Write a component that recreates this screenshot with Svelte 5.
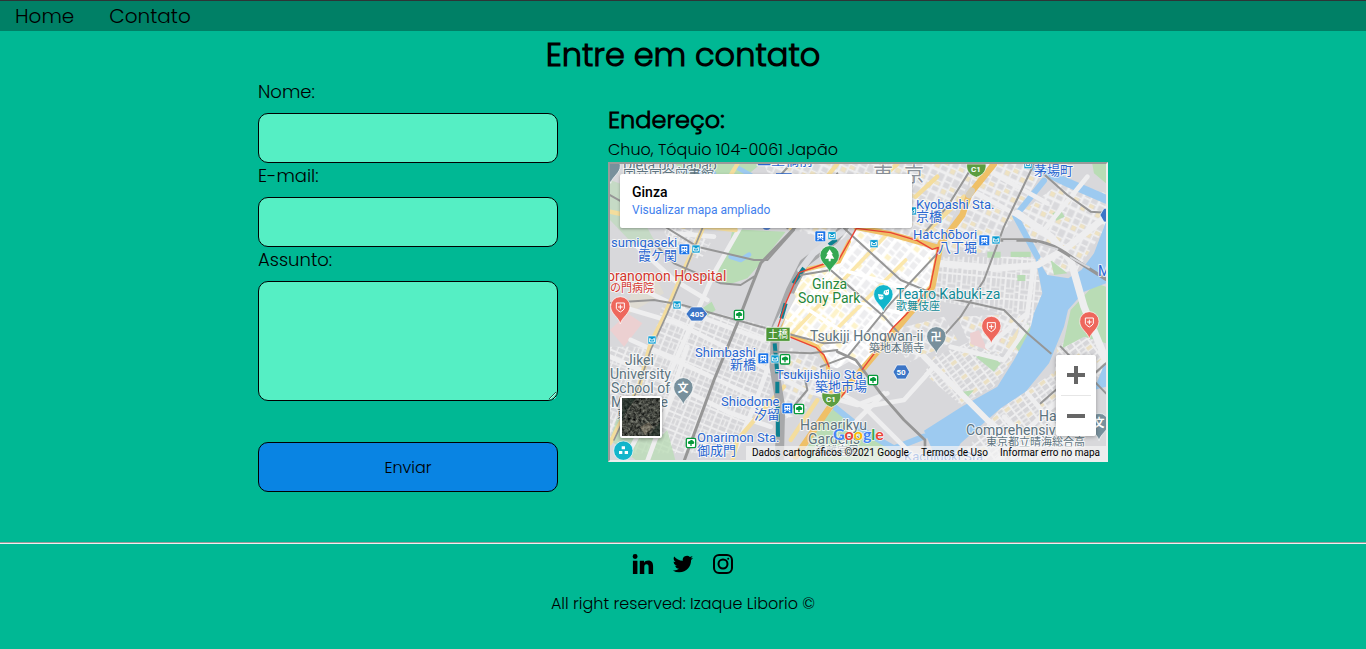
<script>
  let nome = $state('');
  let email = $state('');
  let assunto = $state('');

  // Map places use a grid three times finer than the drawn size.
  const px = (n) => Math.round(n / 3);

  const blue = '#2a67d0';
  const slate = '#5d7480';
  const red = '#d3352c';
  const green = '#25873b';
  const teal = '#118a96';

  const labels = [
    ['Dieta do Japão', 56, 29, 14, slate],
    ['国立国会図書館', 56, 58, 13, slate],
    ['二重橋前', 460, 15, 14, blue],
    ['東', 806, 66, 20, '#8d939b'],
    ['京', 900, 66, 20, '#8d939b'],
    ['茅場町', 1291, 46, 13, blue],
    ['Kyobashi Sta.', 937, 147, 13, blue],
    ['京橋', 937, 184, 13, blue],
    ['Hatchōbori', 928, 237, 13, blue],
    ['八丁堀', 1003, 275, 13, blue],
    ['sumigaseki', 20, 261, 13, blue],
    ['霞ケ関', 103, 300, 13, blue],
    ['oranomon Hospital', 8, 363, 14, red],
    ['の門病院', 18, 395, 11, red],
    ['Ginza', 625, 387, 14, green],
    ['Sony Park', 583, 429, 14, green],
    ['Teatro Kabuki-za', 877, 417, 14, teal],
    ['歌舞伎座', 877, 449, 11, teal],
    ['Tsukiji Hongwan-ii', 619, 543, 14, slate],
    ['築地本願寺', 796, 577, 11, slate],
    ['Shimbashi', 274, 591, 13, blue],
    ['新橋', 379, 628, 13, blue],
    ['Tsukijishijo Sta.', 517, 656, 13, blue],
    ['築地市場', 634, 694, 13, blue],
    ['Jikei', 64, 614, 14, slate],
    ['University', 18, 656, 14, slate],
    ['School of', 22, 698, 14, slate],
    ['Medicine', 22, 740, 14, slate],
    ['東京慈', 40, 775, 11, slate],
    ['Shiodome', 352, 739, 13, blue],
    ['汐留', 451, 778, 13, blue],
    ['Hamarikyu', 589, 811, 14, slate],
    ['Gardens', 613, 853, 14, slate],
    ['浜離宮恩', 632, 886, 11, slate],
    ['Onarimon Sta.', 280, 845, 13, blue],
    ['御成門', 280, 884, 13, blue],
    ['Kachidoki Sta.', 900, 902, 13, blue],
    ['Harumi', 1306, 783, 14, slate],
    ['Comprehensive', 1087, 825, 14, slate],
    ['東京都立晴海総合高', 1146, 857, 11, slate],
    ['M', 1483, 347, 14, blue]
  ];

  const trains = [[241, 268], [649, 229], [1141, 241], [478, 595], [550, 745]];
  const metros = [[276, 267], [684, 227], [810, 251], [1176, 240], [219, 435], [144, 540], [513, 597], [1272, 14], [925, 153]];
  const subways = [[405, 465], [543, 598], [585, 747], [261, 849], [807, 660]];
  const pins = [
    [677, 287, '#34a853', 'tree'],
    [838, 404, '#12b5cb', 'mask'],
    [49, 440, '#ee675c', 'cross'],
    [1162, 499, '#ee675c', 'cross'],
    [1456, 485, '#ee675c', 'cross'],
    [997, 530, '#78909c', '卍'],
    [238, 683, '#78909c', '文'],
    [1485, 790, '#78909c', '文'],
    [20, 18, '#78909c', '']
  ];
</script>

<header>
  <nav>
    <a href="#home">Home</a>
    <a href="#contato">Contato</a>
  </nav>
</header>

<main>
  <h1>Entre em contato</h1>
  <div class="columns">
    <form onsubmit={(e) => e.preventDefault()}>
      <label for="nome">Nome:</label>
      <input id="nome" type="text" bind:value={nome} />
      <label for="email">E-mail:</label>
      <input id="email" type="email" bind:value={email} />
      <label for="assunto">Assunto:</label>
      <textarea id="assunto" bind:value={assunto}></textarea>
      <button class="send" type="submit">Enviar</button>
    </form>

    <section class="address">
      <h2>Endereço:</h2>
      <p>Chuo, Tóquio 104-0061 Japão</p>
      <div class="map">
        <svg class="canvas" viewBox="6 4 496 296" preserveAspectRatio="xMidYMid slice" aria-hidden="true">
          <defs>
            <pattern id="ginza" width="52" height="74" patternUnits="userSpaceOnUse" patternTransform="rotate(39)">
              <rect width="52" height="74" fill="#fff" />
              <path d="M5 5h17v26H5zM28 5h18v12H28zM28 22h18v20H28zM5 37h17v12H5zM28 48h18v20H28z" fill="#ededef" />
              <path d="M5 54h17v15H5z" fill="#fdf3cb" />
            </pattern>
            <pattern id="ginzaWarm" width="42" height="58" patternUnits="userSpaceOnUse" patternTransform="rotate(39)">
              <rect width="42" height="58" fill="#fff" />
              <path d="M4 4h14v22H4zM23 4h14v14H23zM23 23h14v30H23z" fill="#fdf3cb" />
              <path d="M4 31h14v22H4z" fill="#efeff0" />
            </pattern>
            <pattern id="north" width="50" height="66" patternUnits="userSpaceOnUse" patternTransform="rotate(25)">
              <rect width="50" height="66" fill="#efeff0" />
              <path d="M4 4h18v14H4zM27 4h19v22H27zM4 23h18v17H4zM27 31h19v11H27zM4 45h18v16H4zM27 47h19v14H27z" fill="#d9d9dc" />
              <path d="M27 31h15v11H27zM6 45h14v14H6z" fill="#eee2c2" />
            </pattern>
            <pattern id="east" width="44" height="62" patternUnits="userSpaceOnUse" patternTransform="rotate(5)">
              <rect width="44" height="62" fill="#eeeeef" />
              <path d="M3 3h11v25H3zM18 3h9v25h-9zM31 3h10v16H31zM31 23h10v14H31zM3 32h24v11H3zM3 47h11v12H3zM18 47h9v12h-9zM31 41h10v18H31z" fill="#d7d7da" />
            </pattern>
            <pattern id="west" width="46" height="52" patternUnits="userSpaceOnUse" patternTransform="rotate(22)">
              <rect width="46" height="52" fill="#ededee" />
              <path d="M3 3h16v12H3zM23 3h20v9H23zM3 19h16v14H3zM23 16h8v17h-8zM35 16h8v17h-8zM3 37h16v12H3zM23 37h20v12H23z" fill="#d6d6d9" />
            </pattern>
            <pattern id="islands" width="44" height="52" patternUnits="userSpaceOnUse" patternTransform="rotate(-37)">
              <rect width="44" height="52" fill="#eeeeef" />
              <path d="M3 3h16v8H3zM3 15h16v9H3zM3 28h16v8H3zM3 40h16v9H3zM23 3h18v13H23zM23 35h18v14H23z" fill="#d6d6d9" />
              <path d="M23 20h18v11H23z" fill="#ebe0c3" />
            </pattern>
          </defs>

          <g transform="scale(0.33333)" fill="none" stroke-linecap="round" stroke-linejoin="round">
            <rect width="1520" height="920" fill="#d8d8db" />

            <!-- street blocks -->
            <path d="M480 12H1120L1010 250 760 200 700 250 560 205Z" fill="url(#north)" />
            <path d="M1110 12H1330L1240 160 1150 280 1010 270 1080 160Z" fill="url(#north)" />
            <path d="M1000 290H1290L1315 400 1285 500 1150 450 985 420Z" fill="url(#east)" />
            <path d="M1240 165L1380 60 1506 100V200L1420 330 1330 345Z" fill="url(#north)" />
            <path d="M180 420L500 500 500 700 380 880H90L140 560Z" fill="url(#west)" />
            <path d="M130 100L320 250 290 300 200 260Z" fill="url(#west)" />
            <path d="M18 560L140 560 100 760 18 840Z" fill="url(#west)" />
            <path d="M550 560L640 590 660 640 600 760 530 780Z" fill="url(#north)" />
            <path d="M865 510L1020 470 1060 540 910 610Z" fill="url(#north)" />
            <path d="M990 590L1110 540 1230 590 1170 680 1070 735 960 640Z" fill="url(#islands)" />
            <path d="M1060 470L1280 460 1240 590 1100 560Z" fill="url(#north)" />
            <path d="M1190 745L1345 640 1420 700 1420 900H1060Z" fill="url(#islands)" />
            <path d="M1360 560L1450 500 1506 590V650H1350Z" fill="url(#islands)" />
            <path d="M910 590L960 680 1010 760 950 830 780 690Z" fill="#d8d8db" />

            <!-- parks -->
            <g fill="#b9dcb5">
              <path d="M385 208L545 215 470 310 430 355 370 375 322 350 375 265Z" />
              <path d="M215 12H470L430 45H240Z" />
              <path d="M18 60L60 75 150 240 90 255 18 180Z" opacity=".6" />
              <path d="M690 745L800 830 860 860 830 904H590L640 800Z" />
              <path d="M1400 450L1475 370 1506 380V550L1440 530 1375 565Z" />
              <path d="M1465 12H1506V70L1470 40Z" />
              <path d="M40 770L160 840 190 810 215 904H100L18 840Z" opacity=".75" />
              <path d="M1115 590L1170 635 1190 610 1150 580Z" />
              <path d="M1075 695L1110 690 1080 725Z" />
              <path d="M1340 300L1390 340 1350 345Z" />
              <path d="M1235 560L1270 490 1285 510 1255 590Z" />
              <path d="M1150 275h40v18h-40zM1220 275h60v16h-60zM1240 345h24v18h-24zM1345 160l25-10 12 20-25 12zM295 445l28-20 12 25-26 18z" />
            </g>
            <path d="M18 510L70 460 115 490 60 560Z" fill="#ecd0d1" />
            <path d="M1098 520L1125 510 1150 570 1100 552Z" fill="#ecd0d1" />
            <path d="M1170 520L1195 510 1190 545Z" fill="#ecd0d1" />
            <path d="M1205 560L1245 500 1230 575Z" fill="#eee2c2" />
            <path d="M60 470L180 400 150 340 90 370Z" fill="#e6dfcb" opacity=".5" />

            <!-- water -->
            <path d="M1506 185L1470 280 1432 330 1393 355 1330 345 1293 285 1315 400 1290 460 1278 510 1230 600 1180 680 1073 740 960 812 1000 904H1040L1070 850 1190 745 1265 695 1335 610 1380 500 1392 450 1440 395 1518 365Z" fill="#9dcaf0" />
            <path d="M1320 62L1234 168 1300 290" stroke="#9dcaf0" stroke-width="18" />
            <path d="M1275 12L1395 70 1506 118" stroke="#9dcaf0" stroke-width="26" />
            <path d="M690 740L790 820 870 865 960 830" stroke="#9dcaf0" stroke-width="18" />
            <path d="M330 40L230 30M395 20L440 45M380 290L410 300 435 284" stroke="#9dcaf0" stroke-width="14" />
            <path d="M1490 640L1506 600V680L1470 690Z" fill="#9dcaf0" />

            <!-- minor roads -->
            <g stroke="#eeeeef" stroke-width="14">
              <path d="M18 430L220 490 420 590 600 690 760 735 850 700" />
              <path d="M18 350L120 390 260 460 480 540" />
              <path d="M60 70L210 220 330 230M100 260L210 360 310 420" />
              <path d="M310 12L360 140 410 200 330 340 180 680 60 904" />
              <path d="M1240 160L1340 230 1400 300 1440 440 1506 600" stroke-width="22" />
              <path d="M1010 310L1180 325 1300 315 1380 270 1506 170" stroke-width="20" />
              <path d="M960 590L1150 780 1260 870" stroke-width="18" />
              <path d="M990 620L900 720 780 740 690 690" />
              <path d="M1120 100L1320 210 1450 50M1150 30L1330 130" />
              <path d="M1290 310L1270 460 1150 560M1040 560L1200 600 1270 500" />
              <path d="M1180 900L1330 750 1500 600M1270 700L1420 880M1200 770L1290 870" />
              <path d="M840 700L760 780 700 880M780 740L940 900" />
              <path d="M18 590L200 670 380 760 500 800M80 540L300 640 470 720" />
              <path d="M130 904L190 740 250 560M390 880L450 740 500 600" />
            </g>
            <g stroke="#f4dd9d" stroke-width="13">
              <path d="M300 198L240 330 180 470 140 550 105 680 18 850" />
              <path d="M400 12L330 130 300 198M700 12L620 110 560 205" />
              <path d="M18 155L160 185 240 200M395 210L300 200" />
              <path d="M540 680L460 770 400 840 385 904" />
              <path d="M880 12L790 90 740 190" />
              <path d="M1000 50L935 110M930 250L1080 110" />
              <path d="M560 840L640 720" />
            </g>

            <!-- highlighted district -->
            <path d="M757 205L860 222 1003 265 980 383 905 470 775 625 735 605 700 625 675 620 660 585 640 565 555 530 522 500 545 430 585 345 660 315 705 300 735 245Z" fill="url(#ginza)" />
            <path d="M620 340L700 320 730 400 690 500 640 560 555 528 535 490 585 370Z" fill="url(#ginzaWarm)" />
            <path d="M850 222L560 525M905 300L640 565" stroke="#fbe7ab" stroke-width="11" />
            <path d="M970 300L700 600M760 250L560 480M715 330L965 400M650 400L890 460M600 440L800 570" stroke="#fff" stroke-width="11" />

            <!-- expressway -->
            <path d="M1170 12L1095 105 1075 165 1010 250 985 380 905 475 780 622 682 735 575 890" stroke="#efc067" stroke-width="19" />
            <path d="M1000 262L860 222 757 202" stroke="#efc067" stroke-width="17" />
            <path d="M735 245L705 305 600 330 575 370 525 510 640 560 670 610 682 700" stroke="#f4c66b" stroke-width="12" />
            <path d="M1095 105L1103 92" stroke="#d5cdb9" stroke-width="20" />

            <!-- railways -->
            <path d="M800 100L690 240 600 310 560 390 515 505 510 620 530 740 526 904" stroke="#a7a8aa" stroke-width="27" />
            <path d="M715 215L628 280 590 330M565 410L518 500" stroke="#dcdde1" stroke-width="20" />
            <path d="M697 238L675 255M600 324L568 370M545 430L532 475M512 550L520 640M520 665V700M521 740L522 830" stroke="#0d8090" stroke-width="12" stroke-linecap="butt" />
            <g stroke="#969696" stroke-width="6">
              <path d="M585 190L470 310 440 385 400 490 330 660 240 904" stroke-width="9" />
              <path d="M18 105L150 180 280 260 450 300 490 300 570 210" />
              <path d="M140 240L210 310 350 370 410 375 450 350" />
              <path d="M18 428L150 420 235 435 470 500 660 550 730 545" />
              <path d="M295 205L240 340 190 460 140 570 100 690 30 840" stroke-width="5" />
              <path d="M560 12L460 120 430 160" />
              <path d="M700 40L620 150 550 205" />
              <path d="M590 345L680 330 840 470 925 565" />
              <path d="M720 205L890 360 1010 410 1110 430 1200 450 1270 520 1340 580" />
              <path d="M1010 270L860 430 730 590 650 620" />
              <path d="M1290 12L1200 200 1140 360 1070 470 990 560" />
              <path d="M1110 12L1030 140 960 220" />
              <path d="M1295 20L1390 105 1460 155 1506 158" />
              <path d="M1180 240H1270C1350 245 1390 285 1430 310L1506 358" stroke-width="10" />
              <path d="M700 575L755 600 830 700 900 780 963 840V904" stroke-width="8" />
              <path d="M510 575L620 580 700 570M530 640L600 640 610 690 560 750" />
              <path d="M1310 730L1400 650 1450 660 1506 610M1370 560L1506 700" />
            </g>
            <path d="M1200 243H1235M1300 250L1360 268M1400 292L1455 322" stroke="#d5d5d8" stroke-width="6" />

            <!-- district edge -->
            <path d="M757 205L860 218 940 242 985 268 1003 262 978 383 905 465 865 505 830 555 775 628M710 712L728 690M675 620L660 585 635 562 555 530M522 500L545 430 585 338 660 312 705 298 735 245 757 205" stroke="#ea4335" stroke-width="4" />
          </g>

          <g class="labels">
            {#each labels as [text, x, y, size, color]}
              <text x={px(x)} y={px(y)} font-size={size} fill={color}>{text}</text>
            {/each}
          </g>

          <g transform="scale(0.33333)">
            {#each trains as [x, y]}
              <g transform="translate({x} {y})">
                <rect x="-16" y="-16" width="32" height="32" rx="4" fill="#1a73e8" stroke="#fff" stroke-width="2" />
                <path d="M-9 -10H9V6H-9ZM-7 7L-11 12H-6L-4 8H4L6 12H11L7 7Z" fill="#fff" />
                <path d="M-6 -6H-1V-1H-6ZM1 -6H6V-1H1ZM-5 2H-2V4H-5ZM2 2H5V4H2Z" fill="#1a73e8" />
              </g>
            {/each}
            {#each metros as [x, y]}
              <g transform="translate({x} {y})">
                <rect x="-12" y="-12" width="24" height="24" rx="2" fill="#0a9bd0" stroke="#fff" stroke-width="2" />
                <path d="M-7 6V-5L0 1 7 -5V6Z" fill="none" stroke="#fff" stroke-width="3" />
              </g>
            {/each}
            {#each subways as [x, y]}
              <g transform="translate({x} {y})">
                <rect x="-14" y="-14" width="28" height="28" rx="4" fill="#fff" stroke="#079a3b" stroke-width="4" />
                <path d="M-2 9V3H-7C-12 -1 -8 -6 -4 -6 0 -11 5 -8 6 -6 12 -4 10 3 6 3H2V9Z" fill="#079a3b" />
              </g>
            {/each}

            <g stroke="#fff" stroke-width="2">
              <path d="M262 441H294L311 462 294 483H262L246 462Z" fill="#3c75c6" />
              <path d="M879 615H905L917 636 905 657H879L867 636Z" fill="#3c75c6" />
              <path d="M1500 145H1520V186H1500L1488 165Z" fill="#3c75c6" />
              <path d="M1088 12H1146C1148 36 1134 46 1117 52 1100 46 1086 36 1088 12Z" fill="#5c9d40" />
              <path d="M654 698Q682 706 710 698C714 724 698 736 682 742 666 736 650 724 654 698Z" fill="#5c9d40" />
              <path d="M486 502H558V544H486Z" fill="#4d9637" />
            </g>
            <path d="M516 40H563V48H516ZM476 205H500Q488 214 476 205Z" fill="#2a67d0" />

            {#each pins as [x, y, color, glyph]}
              <g transform="translate({x} {y})">
                <path d="M0 52C-4 32 -29 22 -29 -1A29 29 0 0 1 29 -1C29 22 4 32 0 52Z" fill={color} stroke="#fff" stroke-width="2" />
                {#if glyph === 'tree'}
                  <path d="M0 -19L10 -4H6L14 9H3V17H-3V9H-14L-6 -4H-10Z" fill="#fff" />
                {:else if glyph === 'cross'}
                  <path d="M-12 -11H12V5Q10 11 0 16Q-10 11 -12 5ZM0 -6V8M-7 1H7" fill="none" stroke="#fff" stroke-width="3" />
                {:else if glyph === 'mask'}
                  <path d="M-16 -2L0 0V11Q-5 18 -13 12ZM2 -12L17 -16V-3Q14 4 5 1L3 -3H0Z" fill="#fff" />
                  <path d="M-11 5H-8M-5 6H-2M5 -8H8M11 -9H14" stroke="#12b5cb" stroke-width="3" />
                {/if}
              </g>
            {/each}
            <circle cx="58" cy="872" r="29" fill="#12b5cb" stroke="#fff" stroke-width="2" />
            <path d="M53 859H63V868H53ZM45 873H55V882H45ZM62 873H72V882H62Z" fill="#fff" />
          </g>

          <g class="signs">
            {#each pins.filter((p) => p[3].length === 1) as [x, y, , glyph]}
              <text x={px(x)} y={px(y) + 4} font-size="11">{glyph}</text>
            {/each}
            <text x="93" y="157" font-size="8">405</text>
            <text x="297" y="215" font-size="8">50</text>
            <text x="372" y="12" font-size="8">C1</text>
            <text x="227" y="242" font-size="8">C1</text>
            <text x="174" y="178" font-size="10" font-weight="400">土橋</text>
          </g>
          <text class="brand" x="229" y="280"><tspan fill="#4285f4">G</tspan><tspan fill="#ea4335">o</tspan><tspan fill="#fbbc04">o</tspan><tspan fill="#4285f4">g</tspan><tspan fill="#34a853">l</tspan><tspan fill="#ea4335">e</tspan></text>
        </svg>

        <div class="place">
          <strong>Ginza</strong>
          <a href="#mapa">Visualizar mapa ampliado</a>
        </div>

        <button class="satellite" type="button" aria-label="Satélite">
          <svg viewBox="0 0 38 38" aria-hidden="true">
            <filter id="ground" x="0" y="0" width="100%" height="100%" color-interpolation-filters="sRGB">
              <feTurbulence type="fractalNoise" baseFrequency=".35" numOctaves="4" seed="8" />
              <feColorMatrix values=".6 .3 0 0 -.18  .6 .3 0 0 -.17  .55 .3 0 0 -.17  0 0 0 0 1" />
            </filter>
            <rect width="38" height="38" filter="url(#ground)" />
            <path d="M0 0H14L3 15 0 24ZM38 24L27 38H38Z" fill="#16271f" opacity=".5" />
            <path d="M18 29L27 24 31 29 23 37Z" fill="#c3b397" opacity=".35" />
          </svg>
        </button>

        <div class="zoom">
          <button type="button" aria-label="Aumentar o zoom">
            <svg viewBox="0 0 18 18" aria-hidden="true"><path d="M7 0h4v7h7v4h-7v7H7v-7H0V7h7z" /></svg>
          </button>
          <button type="button" aria-label="Diminuir o zoom">
            <svg viewBox="0 0 18 18" aria-hidden="true"><path d="M0 7h18v4H0z" /></svg>
          </button>
        </div>

        <div class="credits">
          <span>Dados cartográficos ©2021 Google</span>
          <a href="#termos">Termos de Uso</a>
          <a href="#erro">Informar erro no mapa</a>
        </div>
      </div>
    </section>
  </div>
</main>

<footer>
  <div class="social">
    <a href="#linkedin" aria-label="LinkedIn">
      <svg viewBox="0 0 24 24"><path d="M1 8.500h4.900V23H1zM3.400 1.200a2.700 2.700 0 1 1 0 5.400 2.700 2.700 0 0 1 0-5.400zM8.500 8.500h4.600v2c.9-1.500 2.400-2.400 4.500-2.400 4.200 0 5.400 2.700 5.400 6.700V23h-4.900v-7.300c0-2-.3-3.400-2.200-3.400-2 0-2.500 1.400-2.500 3.400V23H8.500z" /></svg>
    </a>
    <a href="#twitter" aria-label="Twitter">
      <svg viewBox="-1 -1 26 26"><path d="M23.950 4.570a10 10 0 0 1-2.820.770 4.960 4.960 0 0 0 2.160-2.720c-.950.550-2.010.950-3.130 1.180a4.920 4.920 0 0 0-8.380 4.480C7.690 8.090 4.070 6.130 1.640 3.160a4.820 4.820 0 0 0-.670 2.480c0 1.710.870 3.210 2.190 4.100a4.900 4.900 0 0 1-2.230-.620v.060a4.920 4.920 0 0 0 3.950 4.830 5 5 0 0 1-2.210.080 4.940 4.940 0 0 0 4.600 3.420A9.870 9.870 0 0 1 0 19.540a14 14 0 0 0 7.550 2.210c9.050 0 14-7.500 14-13.980l-.020-.630a9.900 9.900 0 0 0 2.420-2.570z" /></svg>
    </a>
    <a href="#instagram" aria-label="Instagram">
      <svg viewBox="0 0 24 24" fill="none" stroke="#000" stroke-width="2.200"><rect x="2.200" y="2.200" width="19.600" height="19.600" rx="5.500" /><circle cx="12" cy="12" r="4.900" /><circle cx="17.700" cy="6.300" r=".5" stroke-width="1.200" /></svg>
    </a>
  </div>
  <p>All right reserved: Izaque Liborio ©</p>
</footer>

<style>
  :global(body) {
    background: #00b894;
    color: #000;
    font-family: "Poppins Light", Poppins, Inter, sans-serif;
    font-weight: 300;
  }
  header {
    background: #008066;
    border-top: 1px solid #2d3436;
  }
  nav {
    display: flex;
    gap: 35px;
    padding: 0 15px;
    font-size: 20px;
    line-height: 30px;
  }
  a {
    color: inherit;
    text-decoration: none;
  }
  h1, h2, p {
    margin: 0;
  }
  h1 {
    font-size: 32px;
    font-weight: 700;
    line-height: 48px;
    text-align: center;
  }
  .columns {
    display: flex;
    flex-wrap: wrap;
    justify-content: center;
    gap: 50px;
    padding: 0 15px;
  }
  form {
    display: flex;
    flex-direction: column;
    width: 300px;
  }
  label {
    margin-bottom: 9px;
    font-size: 18px;
    line-height: 25px;
  }
  input, textarea, .send {
    box-sizing: border-box;
    width: 100%;
    height: 50px;
    padding: 10px;
    border: 1px solid #000;
    border-radius: 10px;
    background: #55efc4;
    color: #000;
    font: inherit;
  }
  textarea {
    height: 120px;
  }
  .send {
    margin-top: 41px;
    background: #0984e3;
    font-size: 16px;
  }
  .address {
    width: 500px;
    padding-top: 23px;
  }
  h2 {
    font-size: 24px;
    font-weight: 700;
    line-height: 36px;
  }
  .address p {
    font-size: 16px;
    line-height: 24px;
  }
  .map {
    position: relative;
    border: 2px inset #eee;
    overflow: hidden;
    font-family: Roboto, "Noto Sans CJK JP", sans-serif;
    font-weight: 400;
  }
  .canvas {
    display: block;
    width: 100%;
  }
  .labels {
    paint-order: stroke;
    stroke: rgba(255, 255, 255, 0.75);
    stroke-width: 2px;
    stroke-linejoin: round;
  }
  .signs {
    fill: #fff;
    font-weight: 700;
    text-anchor: middle;
  }
  .brand {
    font-family: Lato, sans-serif;
    font-size: 16px;
    font-weight: 700;
    paint-order: stroke;
    stroke: #fff;
    stroke-width: 1px;
  }
  .place {
    position: absolute;
    top: 10px;
    left: 10px;
    box-sizing: border-box;
    width: 292px;
    padding: 9px 12px 8px;
    border-radius: 2px;
    background: #fff;
    box-shadow: 0 1px 3px rgba(0, 0, 0, 0.3);
  }
  .place strong {
    display: block;
    font-size: 14px;
    font-weight: 500;
    line-height: 18px;
  }
  .place a {
    display: block;
    color: #427fed;
    font-size: 12px;
    line-height: 19px;
  }
  .satellite {
    position: absolute;
    bottom: 22px;
    left: 10px;
    width: 42px;
    height: 42px;
    padding: 0;
    border: 2px solid #fff;
    border-radius: 2px;
    background: #fff;
    box-shadow: 0 1px 4px rgba(0, 0, 0, 0.4);
  }
  .satellite svg {
    display: block;
  }
  .zoom {
    position: absolute;
    right: 10px;
    bottom: 24px;
    width: 40px;
    border-radius: 2px;
    background: #fff;
    box-shadow: 0 1px 4px rgba(0, 0, 0, 0.3);
  }
  .zoom button {
    display: grid;
    place-items: center;
    width: 100%;
    height: 40px;
    padding: 0;
    border: 0;
    background: none;
  }
  .zoom button + button::before {
    content: "";
    position: absolute;
    top: 40px;
    width: 30px;
    border-top: 1px solid #e6e6e6;
  }
  .zoom button + button {
    height: 41px;
  }
  .zoom svg {
    width: 18px;
    fill: #666;
  }
  .credits {
    position: absolute;
    right: 0;
    bottom: 0;
    display: flex;
    gap: 12px;
    padding: 0 6px;
    background: rgba(245, 245, 245, 0.7);
    font-size: 10px;
    line-height: 14px;
  }
  footer {
    margin-top: 50px;
    border-top: 1px solid #9a9a9a;
    text-align: center;
  }
  .social {
    display: flex;
    justify-content: center;
    gap: 18px;
    padding-top: 9px;
    border-top: 1px solid #eee;
  }
  .social svg {
    display: block;
    width: 22px;
    height: 22px;
  }
  footer p {
    padding-top: 17px;
    font-size: 16px;
    line-height: 24px;
  }
</style>
